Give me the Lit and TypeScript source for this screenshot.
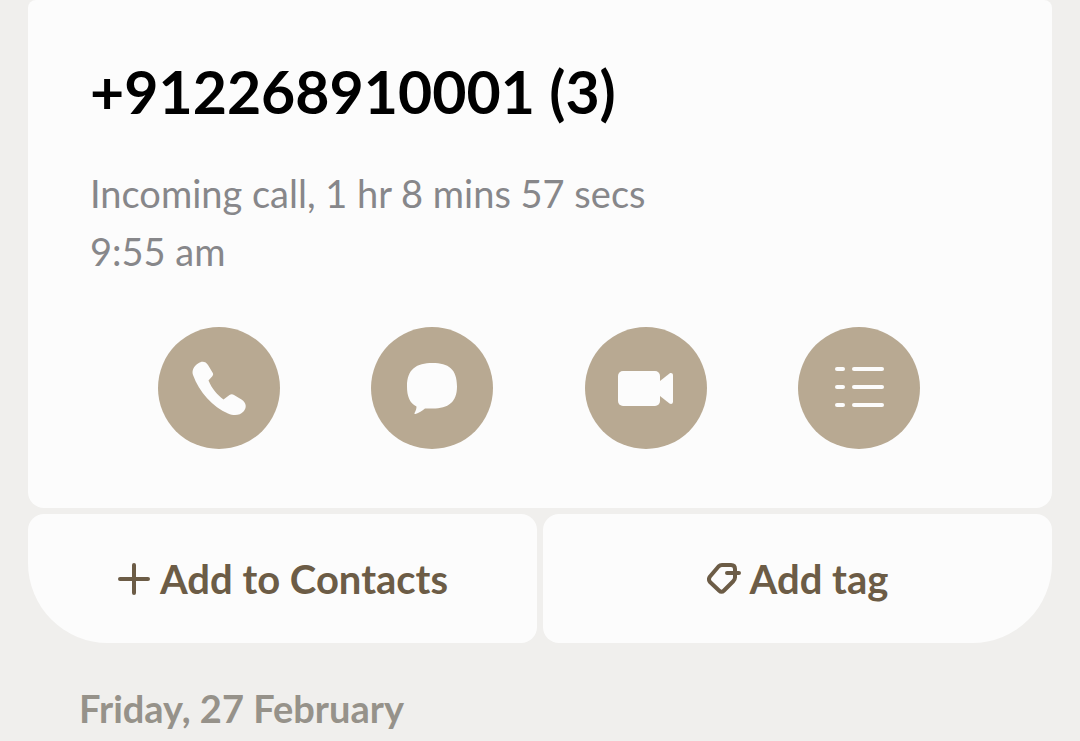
import { css, html, LitElement, svg } from 'lit';
import { customElement, property } from 'lit/decorators.js';

const icons = {
  call: svg`
    <path
      d="M9 3.500C13 .5 17 1.600 19 5L23.500 12.500C24.500 14 24.300 15 23.300 16.200L19.500 20.500C23 29 28.500 35 34.500 39.500L40.500 35C42 34 43.500 34 45 35L52.500 39.500C57.500 42.500 58 48 54.500 51.500C51 55.500 45 56 39 53.500C24 47 10 32 4 15C2.500 10.500 5 6 9 3.500Z"
    />
  `,
  message: svg`
    <path
      d="M30.500 3C46.500 3 55 9 55 26.500C55 42 46.500 48.500 30.500 48.500C27.500 48.500 24.500 48.500 23 48.500C20 51 17 53 13.500 54C12.500 54.200 12.200 53.500 12.700 52.700C14 50.500 14.500 48.500 14.500 46.500C7.500 43 5 36 5 26.500C5 9 14.500 3 30.500 3Z"
    />
  `,
  video: svg`
    <rect x="2" y="11" width="42" height="35" rx="5" />
    <path d="M44 21L53.500 13.500C55 12.500 57 13 57 15.500V41.500C57 44 55 44.500 53.500 43.500L44 36Z" />
  `,
  details: svg`
    <rect x="6" y="7" width="10" height="4" rx="2" />
    <rect x="23" y="7" width="32" height="4" rx="2" />
    <rect x="6" y="25" width="10" height="4" rx="2" />
    <rect x="23" y="25" width="32" height="4" rx="2" />
    <rect x="6" y="43" width="10" height="4" rx="2" />
    <rect x="23" y="43" width="32" height="4" rx="2" />
  `,
};

@customElement('round-action')
class RoundAction extends LitElement {
  static styles = css`
    :host {
      display: flex;
      justify-content: center;
    }

    .action {
      display: flex;
      align-items: center;
      justify-content: center;
      width: 122px;
      height: 122px;
      padding: 0;
      border: none;
      border-radius: 50%;
      background-color: #b8a992;
      cursor: pointer;
    }

    .icon {
      width: 60px;
      height: 60px;
      fill: #fcfcfc;
    }
  `;

  @property()
  icon: keyof typeof icons = 'call';

  @property()
  label = '';

  protected render(): unknown {
    return html`
      <button class="action" type="button" aria-label=${this.label}>
        <svg class="icon" viewBox="0 -2 60 60" aria-hidden="true">${icons[this.icon]}</svg>
      </button>
    `;
  }
}

@customElement('app-root')
class AppRoot extends LitElement {
  static styles = css`
    :host {
      display: block;
      box-sizing: border-box;
      min-height: 100vh;
      padding: 0 28px;
      background-color: #f0efed;
      font-family: Lato, 'Liberation Sans', sans-serif;
    }

    .card {
      padding: 56px 64px 59px 62px;
      border-radius: 8px 8px 16px 16px;
      background-color: #fcfcfc;
    }

    .number {
      margin: 0;
      font-size: 59px;
      font-weight: 700;
      line-height: 72px;
      color: #000;
    }

    .summary {
      margin: 36px 0 47px;
      font-size: 38px;
      line-height: 58px;
      color: #87878a;
    }

    .line {
      display: block;
    }

    .actions {
      display: grid;
      grid-template-columns: repeat(4, 1fr);
      margin: 0 22px;
    }

    .shortcuts {
      display: grid;
      grid-template-columns: 1fr 1fr;
      gap: 6px;
      margin-top: 6px;
    }

    .shortcut {
      display: flex;
      align-items: center;
      justify-content: center;
      gap: 9px;
      height: 129px;
      padding: 0;
      border: none;
      border-radius: 16px;
      background-color: #fcfcfc;
      font-family: inherit;
      font-size: 40px;
      font-weight: 700;
      color: #6c5c46;
      cursor: pointer;

      &:first-child {
        border-bottom-left-radius: 80px;
      }

      &:last-child {
        border-bottom-right-radius: 80px;
      }
    }

    .glyph {
      width: 34px;
      height: 34px;
      fill: none;
      stroke: currentColor;
      stroke-width: 4;
      stroke-linecap: round;
      stroke-linejoin: round;
    }

    .date {
      margin: 41px 51px 0;
      font-size: 38px;
      font-weight: 700;
      line-height: 48px;
      color: #96928a;
    }
  `;

  protected render(): unknown {
    return html`
      <section class="card">
        <h1 class="number">+912268910001 (3)</h1>
        <p class="summary">
          <span class="line">Incoming call, 1 hr 8 mins 57 secs</span>
          <span class="line">9:55 am</span>
        </p>
        <div class="actions">
          <round-action icon="call" label="Call"></round-action>
          <round-action icon="message" label="Message"></round-action>
          <round-action icon="video" label="Video call"></round-action>
          <round-action icon="details" label="Details"></round-action>
        </div>
      </section>
      <div class="shortcuts">
        <button class="shortcut" type="button">
          <svg class="glyph" viewBox="0 0 34 34" aria-hidden="true">
            <path d="M17 3V31M3 17H31" />
          </svg>
          Add to Contacts
        </button>
        <button class="shortcut" type="button">
          <svg class="glyph" viewBox="0 0 34 34" aria-hidden="true">
            <path
              d="M28 10V7C28 4.500 26.500 3 24 3H15C13.500 3 12.500 3.500 11.500 4.500L3 14.500C1.500 16.500 1.500 18 3 20L12 28.500C13.500 30 15.500 30 17 28.500L26 19.500C27.500 18 28 17 28 15.500V11M20 11H32"
            />
          </svg>
          Add tag
        </button>
      </div>
      <h2 class="date">Friday, 27 February</h2>
    `;
  }
}
